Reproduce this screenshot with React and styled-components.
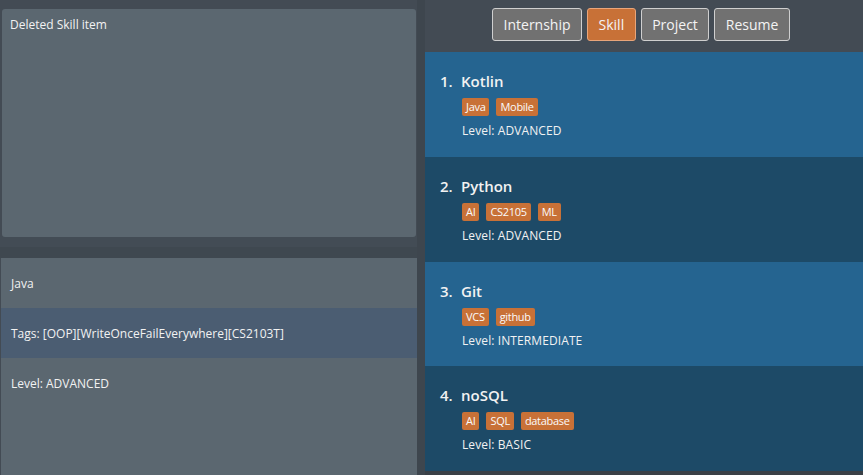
import React from "react";
import styled, { createGlobalStyle } from "styled-components";

const Global = createGlobalStyle`
  html, body { margin: 0; padding: 0; }
  body {
    width: 863px; height: 475px; overflow: hidden;
    background: #434b54;
    font-family: "Open Sans", "Noto Sans", sans-serif;
    color: #f2f2f2;
  }
`;

const Page = styled.div`
  display: flex;
  width: 863px;
  height: 475px;
  background: #434b54;
`;

const LeftColumn = styled.div`
  width: 417px;
  display: flex;
  flex-direction: column;
`;

const DeletedPanel = styled.div`
  margin: 9px 1px 0 2px;
  height: 228px;
  background: #5b6770;
  border-radius: 3px;
  padding: 7px 8px;
  box-sizing: border-box;
  font-size: 12px;
`;

const Divider = styled.div`
  height: 21px;
  background: linear-gradient(#434c55 0 10px, #3f4850 10px);
`;

const DetailPanel = styled.div`
  flex: 1;
  margin-left: 1px;
  background: #5b6770;
  display: flex;
  flex-direction: column;
`;

const DetailRow = styled.div`
  height: 50px;
  display: flex;
  align-items: center;
  padding-left: 10px;
  font-size: 12px;
  background: ${(p) => (p.$alt ? "#4b5d72" : "#5b6770")};
`;

const Gutter = styled.div`
  width: 8px;
  background: #3e464e;
`;

const RightColumn = styled.div`
  flex: 1;
  display: flex;
  flex-direction: column;
  background: #434b54;
`;

const Toolbar = styled.div`
  height: 52px;
  flex-shrink: 0;
  display: flex;
  justify-content: center;
  align-items: flex-start;
  gap: 5px;
  padding: 8px 6px 0 0;
  box-sizing: border-box;
`;

const TabButton = styled.button`
  height: 33px;
  padding: 0 10.5px;
  border-radius: 3px;
  border: 1px solid ${(p) => (p.$active ? "#e8a57a" : "#cfcfcf")};
  background: ${(p) => (p.$active ? "#c87137" : "#717171")};
  color: #f4f4f4;
  font-family: "Open Sans", "Noto Sans", sans-serif;
  font-size: 14px;
  cursor: pointer;
`;

const List = styled.div`
  display: flex;
  flex-direction: column;
  background: #3a4047;
  flex: 1;
`;

const Card = styled.div`
  height: 104.75px;
  flex-shrink: 0;
  box-sizing: border-box;
  padding: 18px 0 0 15px;
  background: ${(p) => (p.$odd ? "#256490" : "#1d4a67")};
  display: flex;
  flex-direction: column;
`;

const TitleRow = styled.div`
  display: flex;
  align-items: baseline;
  font-size: 15px;
  font-weight: 600;
  height: 23px;
  line-height: 23px;
`;

const Index = styled.span`
  width: 21px;
  display: inline-block;
`;

const Tags = styled.div`
  display: flex;
  gap: 7px;
  margin: 5px 0 0 22px;
`;

const Tag = styled.span`
  background: #c87137;
  color: #fafafa;
  font-size: 11px;
  letter-spacing: -0.3px;
  height: 18px;
  line-height: 18px;
  padding: 0 4px;
  border-radius: 2px;
`;

const Level = styled.div`
  margin: 6px 0 0 22px;
  font-size: 12px;
  letter-spacing: 0.1px;
`;

const skills = [
  { name: "Kotlin", tags: ["Java", "Mobile"], level: "ADVANCED" },
  { name: "Python", tags: ["AI", "CS2105", "ML"], level: "ADVANCED" },
  { name: "Git", tags: ["VCS", "github"], level: "INTERMEDIATE" },
  { name: "noSQL", tags: ["AI", "SQL", "database"], level: "BASIC" },
];

export default function App() {
  return (
    <>
      <Global />
      <Page>
        <LeftColumn>
          <DeletedPanel>Deleted Skill item</DeletedPanel>
          <Divider />
          <DetailPanel>
            <DetailRow>Java</DetailRow>
            <DetailRow $alt>Tags: [OOP][WriteOnceFailEverywhere][CS2103T]</DetailRow>
            <DetailRow>Level: ADVANCED</DetailRow>
          </DetailPanel>
        </LeftColumn>
        <Gutter />
        <RightColumn>
          <Toolbar>
            <TabButton>Internship</TabButton>
            <TabButton $active>Skill</TabButton>
            <TabButton>Project</TabButton>
            <TabButton>Resume</TabButton>
          </Toolbar>
          <List>
            {skills.map((s, i) => (
              <Card key={s.name} $odd={i % 2 === 0}>
                <TitleRow>
                  <Index>{i + 1}.</Index>
                  <span>{s.name}</span>
                </TitleRow>
                <Tags>
                  {s.tags.map((t) => (
                    <Tag key={t}>{t}</Tag>
                  ))}
                </Tags>
                <Level>Level: {s.level}</Level>
              </Card>
            ))}
          </List>
        </RightColumn>
      </Page>
    </>
  );
}
